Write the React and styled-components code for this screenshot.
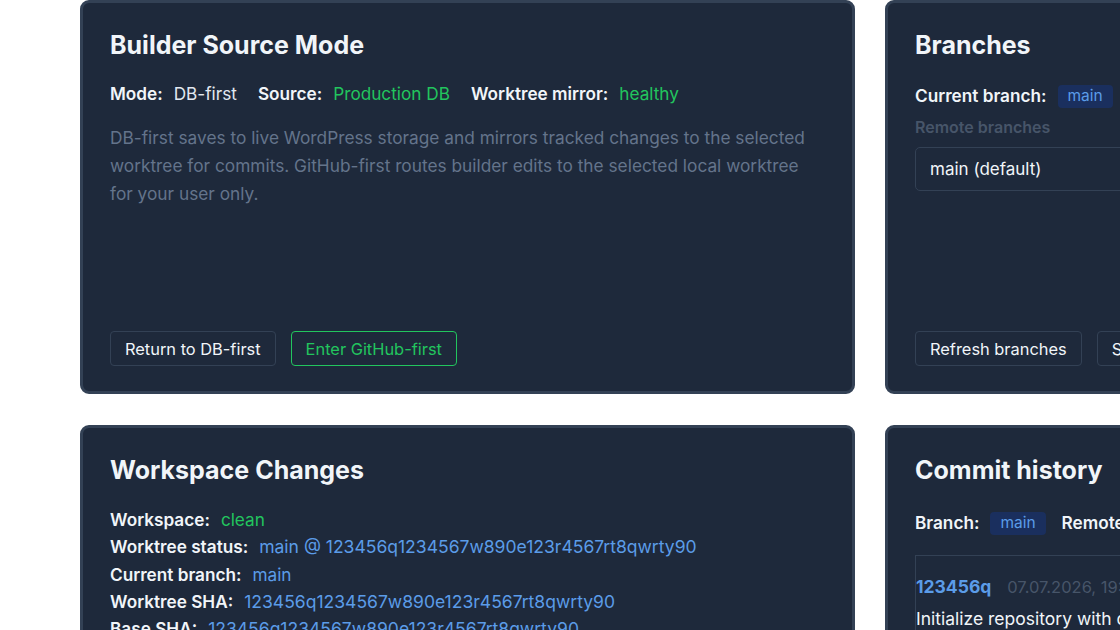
import React from 'react';
import styled, { createGlobalStyle } from 'styled-components';

const GlobalStyle = createGlobalStyle`
    html, body {
        margin: 0;
        padding: 0;
        background: #ffffff;
        overflow: hidden;
    }
    body {
        font-family: Inter, "Noto Sans", sans-serif;
        color: #f1f5f9;
    }
`;

const colors = {
    text: '#f1f5f9',
    muted: '#64748b',
    green: '#22c55e',
    blue: '#5b9ce8',
    border: '#334155',
    card: '#1e293b',
};

const Page = styled.div`
    display: grid;
    grid-template-columns: 775px 775px;
    grid-template-rows: 394px auto;
    column-gap: 30px;
    row-gap: 31px;
    padding-left: 80px;
    width: 1700px;
`;

const Card = styled.section`
    box-sizing: border-box;
    display: flex;
    flex-direction: column;
    background: ${colors.card};
    border: 3px solid ${colors.border};
    border-radius: 9px;
    padding: 27px 27px 25px;
    min-height: 394px;
`;

const Title = styled.h2`
    margin: 0;
    font-size: 25px;
    line-height: 30px;
    font-weight: 700;
    color: ${colors.text};
`;

const InfoRow = styled.div`
    display: flex;
    gap: ${(p) => p.$gap || 21}px;
    margin-top: ${(p) => p.$top || 22}px;
    line-height: 24px;
`;

const Field = styled.div`
    display: flex;
    align-items: center;
    gap: 11px;
    font-size: 17.2px;
    line-height: ${(p) => (p.$tight ? '27.3px' : '24px')};
`;

const Label = styled.span`
    font-weight: 600;
    color: ${colors.text};
`;

const Value = styled.span`
    color: ${(p) => p.$color || '#e2e8f0'};
    white-space: nowrap;
    font-size: ${(p) => (p.$wide ? '17.55px' : 'inherit')};
`;

const Text = styled.p`
    margin: 18px 0 0;
    font-size: 17.3px;
    line-height: 28px;
    color: ${colors.muted};
    max-width: 715px;
`;

const Actions = styled.div`
    display: flex;
    gap: 15px;
    margin-top: auto;
`;

const Button = styled.button`
    font-family: inherit;
    font-size: 16.4px;
    height: 35px;
    padding: 0 14px;
    border-radius: 4px;
    background: transparent;
    white-space: nowrap;
    border: 1px solid ${(p) => (p.$accent ? colors.green : colors.border)};
    color: ${(p) => (p.$accent ? colors.green : colors.text)};
`;

const Badge = styled.span`
    display: inline-flex;
    align-items: center;
    height: 23px;
    padding: 0 10px;
    border-radius: 4px;
    background: #1a2f5e;
    color: ${colors.blue};
    font-size: 15.5px;
`;

const SubLabel = styled.div`
    margin-top: 9px;
    font-size: 16px;
    line-height: 20px;
    font-weight: 600;
    color: #475569;
`;

const Select = styled.div`
    box-sizing: border-box;
    display: flex;
    align-items: center;
    margin-top: 10px;
    height: 44px;
    padding: 0 14px;
    border: 1px solid ${colors.border};
    border-radius: 5px;
    font-size: 17px;
    color: ${colors.text};
    width: 715px;
`;

const Rows = styled.div`
    display: flex;
    flex-direction: column;
    margin-top: 21px;
`;

const CommitList = styled.div`
    margin-top: 20px;
    border-top: 1px solid ${colors.border};
    border-left: 1px solid ${colors.border};
    padding-top: 19px;
`;

const CommitHead = styled.div`
    display: flex;
    align-items: baseline;
    gap: 16px;
    line-height: 24px;
`;

const Hash = styled.span`
    font-size: 17.5px;
    font-weight: 700;
    color: ${colors.blue};
`;

const Date = styled.span`
    font-size: 16.5px;
    color: #475569;
`;

const Message = styled.div`
    margin-top: 8px;
    font-size: 17.5px;
    line-height: 24px;
    color: ${colors.text};
    white-space: nowrap;
`;

const sha = '123456q1234567w890e123r4567rt8qwrty90';

const workspace = [
    ['Workspace:', 'clean', colors.green, false],
    ['Worktree status:', `main @ ${sha}`, colors.blue, true],
    ['Current branch:', 'main', colors.blue, false],
    ['Worktree SHA:', sha, colors.blue, true],
    ['Base SHA:', sha, colors.blue, true],
];

export default function App() {
    return (
        <>
            <GlobalStyle />
            <Page>
                <Card>
                    <Title>Builder Source Mode</Title>
                    <InfoRow>
                        <Field>
                            <Label>Mode:</Label>
                            <Value>DB-first</Value>
                        </Field>
                        <Field>
                            <Label>Source:</Label>
                            <Value $color={colors.green}>Production DB</Value>
                        </Field>
                        <Field>
                            <Label>Worktree mirror:</Label>
                            <Value $color={colors.green}>healthy</Value>
                        </Field>
                    </InfoRow>
                    <Text>
                        DB-first saves to live WordPress storage and mirrors tracked changes to the
                        selected worktree for commits. GitHub-first routes builder edits to the
                        selected local worktree for your user only.
                    </Text>
                    <Actions>
                        <Button>Return to DB-first</Button>
                        <Button $accent>Enter GitHub-first</Button>
                    </Actions>
                </Card>

                <Card>
                    <Title>Branches</Title>
                    <InfoRow $top={24}>
                        <Field>
                            <Label>Current branch:</Label>
                            <Badge>main</Badge>
                        </Field>
                    </InfoRow>
                    <SubLabel>Remote branches</SubLabel>
                    <Select>main (default)</Select>
                    <Actions>
                        <Button>Refresh branches</Button>
                        <Button>Switch branch</Button>
                    </Actions>
                </Card>

                <Card>
                    <Title>Workspace Changes</Title>
                    <Rows>
                        {workspace.map(([label, value, color, wide]) => (
                            <Field key={label} $tight>
                                <Label>{label}</Label>
                                <Value $color={color} $wide={wide}>
                                    {value}
                                </Value>
                            </Field>
                        ))}
                    </Rows>
                </Card>

                <Card>
                    <Title>Commit history</Title>
                    <InfoRow $top={26} $gap={16}>
                        <Field>
                            <Label>Branch:</Label>
                            <Badge>main</Badge>
                        </Field>
                        <Field>
                            <Label>Remote:</Label>
                            <Value>origin/main</Value>
                        </Field>
                    </InfoRow>
                    <CommitList>
                        <CommitHead>
                            <Hash>123456q</Hash>
                            <Date>07.07.2026, 19:42</Date>
                        </CommitHead>
                        <Message>Initialize repository with default theme files</Message>
                    </CommitList>
                </Card>
            </Page>
        </>
    );
}
